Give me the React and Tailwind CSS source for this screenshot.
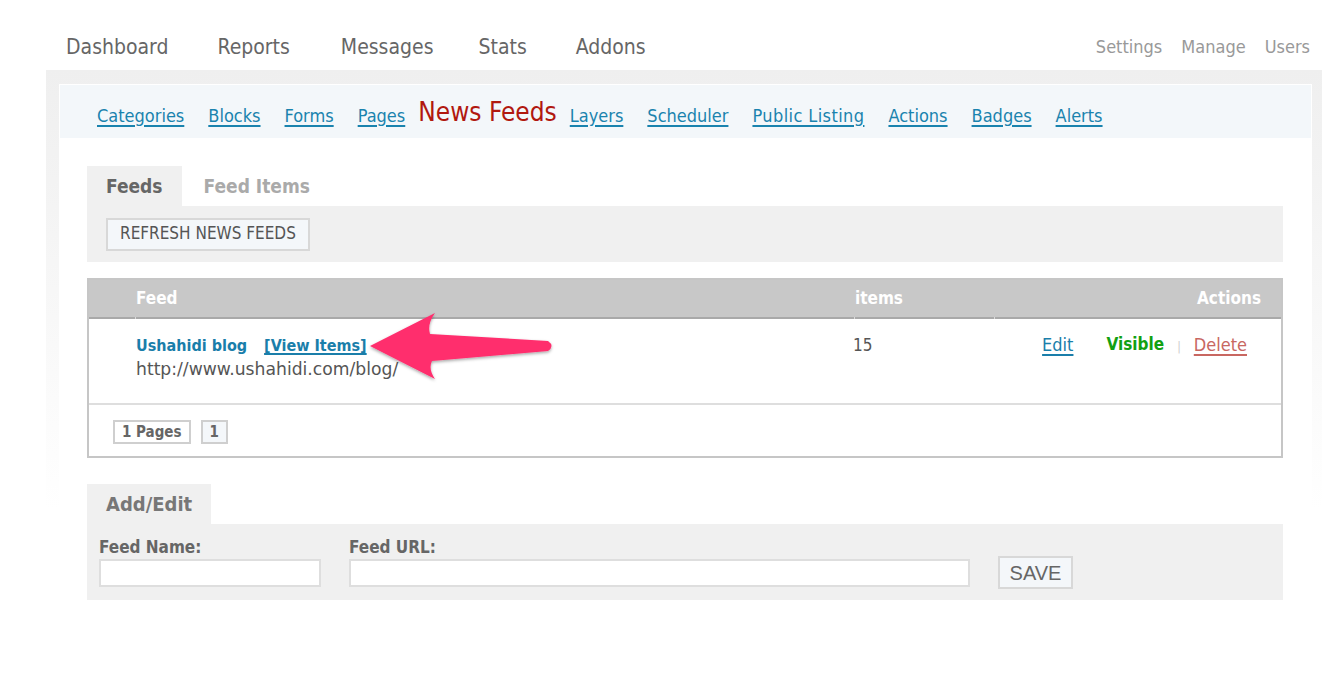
import React from "react";

const F = "font-['DejaVu_Sans_Condensed','DejaVu_Sans',sans-serif]";

function Arrow() {
  return (
    <svg
      className="absolute left-[360px] top-[300px] pointer-events-none"
      width="210"
      height="90"
      viewBox="360 300 210 90"
    >
      <defs>
        <filter id="sh" x="-20%" y="-30%" width="140%" height="160%">
          <feDropShadow dx="0" dy="1.5" stdDeviation="1.5" floodColor="#000" floodOpacity="0.35" />
        </filter>
      </defs>
      <path
        d="M370 346 L435 313 Q427 324 430 334 L548 341 Q555 346 548 351 L432 361 Q428 369 435 379 Z"
        fill="#ff2d6d"
        filter="url(#sh)"
      />
    </svg>
  );
}

export default function App() {
  const sub = ["Categories", "Blocks", "Forms", "Pages"];
  const sub2 = ["Layers", "Scheduler", "Public Listing", "Actions", "Badges", "Alerts"];
  return (
    <div className={`relative w-[1322px] min-h-[674px] bg-white ${F}`}>
      {/* top nav */}
      <div className="h-[70px] flex items-center justify-between pt-[26px] pl-[66px] pr-[12px]">
        <div className="flex text-[21px] text-[#666]">
          <span>Dashboard</span>
          <span className="ml-[49px]">Reports</span>
          <span className="ml-[51px]">Messages</span>
          <span className="ml-[45px]">Stats</span>
          <span className="ml-[49px]">Addons</span>
        </div>
        <div className="flex gap-[19px] text-[18px] text-[#999] -mt-[3px]">
          <span>Settings</span>
          <span>Manage</span>
          <span>Users</span>
        </div>
      </div>

      {/* frame */}
      <div className="ml-[46px] pt-[14px] pl-[13px] pr-[10px] pb-[80px] bg-[linear-gradient(to_bottom,#efefef_0px,#ffffff_440px)]">
        <div className="bg-white p-px">
          {/* sub nav */}
          <div className="h-[53px] bg-[#f3f7fa] flex items-center pt-[7px] pl-[37px] text-[18px]">
            {sub.map((s) => (
              <a key={s} className="mr-[24px] text-[#1a83ae] underline decoration-2 underline-offset-[3px]">
                {s}
              </a>
            ))}
            <span className="-ml-[11px] mr-[13px] text-[26px] text-[#b1180f] -mt-[5px]">News Feeds</span>
            {sub2.map((s) => (
              <a
                key={s}
                className={`mr-[24px] text-[#1a83ae] underline decoration-2 underline-offset-[3px] ${
                  s === "Public Listing" ? "tracking-[0.4px]" : ""
                }`}
              >
                {s}
              </a>
            ))}
          </div>

          {/* content */}
          <div className="pt-[28px] pl-[27px] pr-[28px] pb-[20px]">
            {/* tabs */}
            <div className="flex h-[40px] items-center text-[19px] font-bold">
              <div className="h-full flex items-center px-[19px] bg-[#f0f0f0] text-[#666]">Feeds</div>
              <div className="h-full flex items-center px-[22px] text-[#aaa]">Feed Items</div>
            </div>
            <div className="h-[56px] bg-[#f0f0f0] flex items-center pl-[19px]">
              <button className="h-[33px] px-[12px] bg-[#f4f7fa] border-2 border-[#d8d8d8] text-[17px] text-[#555]">
                REFRESH NEWS FEEDS
              </button>
            </div>

            {/* table */}
            <div className="mt-[16px] border-2 border-[#c6c6c6]">
              <div className="bg-[#c8c8c8] text-white font-bold text-[17px]">
                <div className="grid grid-cols-[46px_718px_139px_1fr] h-[37px] items-center">
                  <div />
                  <div className="pl-px">Feed</div>
                  <div className="pl-[2px]">items</div>
                  <div className="text-right pr-[20px]">Actions</div>
                </div>
                <div className="grid grid-cols-[46px_718px_139px_1fr] gap-x-px bg-[#d9d9d9] h-[2px]">
                  <div className="bg-[#a9a9a9]" />
                  <div className="bg-[#a9a9a9]" />
                  <div className="bg-[#a9a9a9]" />
                  <div className="bg-[#a9a9a9]" />
                </div>
              </div>
              <div className="grid grid-cols-[46px_718px_139px_1fr] h-[86px] border-b-2 border-[#dedede] text-[16px]">
                <div />
                <div className="pl-px pt-[15px]">
                  <div className="flex gap-[17px] font-bold text-[#1a7eaa]">
                    <span>Ushahidi blog</span>
                    <a className="underline decoration-2 underline-offset-[2px]">[View Items]</a>
                  </div>
                  <div className="text-[#555] text-[17.2px] leading-[22px] font-['DejaVu_Sans',sans-serif]">
                    http://www.ushahidi.com/blog/
                  </div>
                </div>
                <div className="pt-[16px] text-[#555] text-[17px] leading-[24px] -mt-[2px]">15</div>
                <div className="pt-[12px] flex items-start justify-end pr-[34px] text-[18px]">
                  <a className="text-[#1a7eaa] underline decoration-2 underline-offset-[3px]">Edit</a>
                  <span className="ml-[33px] font-bold text-[#12a012] text-[17px] mt-[1px]">Visible</span>
                  <span className="mx-[13px] text-[#ccc] text-[12px] mt-[7px]">|</span>
                  <a className="text-[#c86761] underline decoration-2 underline-offset-[3px]">Delete</a>
                </div>
              </div>
              <div className="h-[51px] flex items-start pt-[15px] pl-[24px] gap-[10px] text-[15px] font-bold text-[#666]">
                <span className="h-[24px] px-[7px] flex items-center bg-white border-2 border-[#cfcfcf]">1 Pages</span>
                <span className="h-[24px] px-[7px] flex items-center bg-[#f4f7fa] border-2 border-[#cfcfcf]">1</span>
              </div>
            </div>

            {/* add/edit */}
            <div className="mt-[26px] flex h-[40px]">
              <div className="h-full flex items-center px-[19px] bg-[#f0f0f0] text-[20px] font-bold text-[#777]">
                Add/Edit
              </div>
            </div>
            <div className="h-[76px] bg-[#f0f0f0] flex items-start pl-[12px] pt-[12px] gap-[28px]">
              <div className="flex flex-col">
                <label className="text-[17px] font-bold text-[#666] leading-[23px]">Feed Name:</label>
                <input className="w-[222px] h-[28px] bg-white border-2 border-[#dedede]" />
              </div>
              <div className="flex flex-col">
                <label className="text-[17px] font-bold text-[#666] leading-[23px]">Feed URL:</label>
                <input className="w-[621px] h-[28px] bg-white border-2 border-[#dedede]" />
              </div>
              <button className="mt-[20px] h-[33px] w-[75px] bg-[#f4f7fa] border-2 border-[#d8d8d8] font-['Liberation_Sans',Arial,sans-serif] text-[20px] text-[#666]">
                SAVE
              </button>
            </div>
          </div>
        </div>
      </div>
      <Arrow />
    </div>
  );
}
